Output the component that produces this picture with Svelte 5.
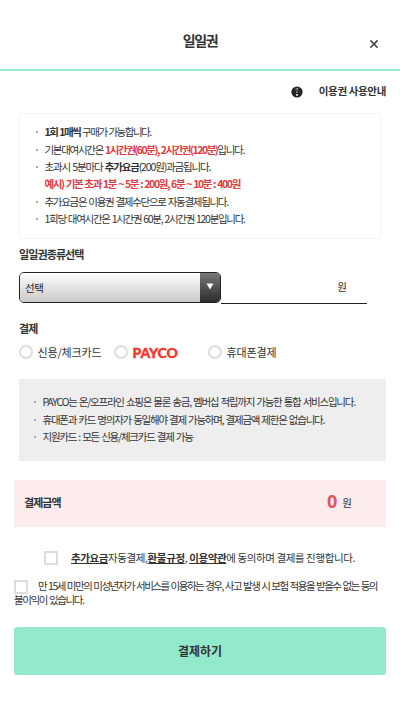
<script>
  const tickets = [
    { id: "1h", name: "1시간권", price: 1000 },
    { id: "2h", name: "2시간권", price: 2000 }
  ];

  let selected = $state("");
  let payment = $state("");
  let agreed = $state(false);
  let adult = $state(false);

  let price = $derived(tickets.find(t => t.id === selected)?.price);
</script>

<div class="page">
  <header>
    <h1>일일권</h1>
    <button class="close" aria-label="닫기">
      <svg width="10" height="10" viewBox="0 0 10 10">
        <path d="M1.4 1.4 L8.6 8.8 M8.6 1.4 L1.4 8.8" stroke="#444" stroke-width="1.6" fill="none" />
      </svg>
    </button>
  </header>

  <div class="guide">
    <svg width="12" height="12" viewBox="0 0 12 12">
      <circle cx="6" cy="6" r="5.6" fill="#222" />
      <path d="M4.6 2.2 Q6 1.2 7.4 2.2 L6.8 7 H5.2 Z" fill="#aaa" />
      <rect x="4.9" y="7.9" width="2.2" height="2" rx="0.8" fill="#ddd" />
      <rect x="5.4" y="2.6" width="1.2" height="4" fill="#222" />
    </svg>
    <span>이용권 사용안내</span>
  </div>

  <ul class="notice">
    <li class="tight"><b>1회 1매씩</b> 구매가 가능합니다.</li>
    <li>기본대여시간은 <b class="red times">1시간권(60분), 2시간권(120분)</b>입니다.</li>
    <li class="loose">초과시 5분마다 <b>추가요금</b>(200원)과금됩니다.</li>
    <li class="plain"><b class="red">예시) 기본 초과 1분 ~ 5분 : 200원, 6분 ~ 10분 : 400원</b></li>
    <li>추가요금은 이용권 결제수단으로 자동결제됩니다.</li>
    <li>1회당 대여시간은 1시간권 60분, 2시간권 120분입니다.</li>
  </ul>

  <h2 class="kind">일일권종류선택</h2>
  <div class="ticket">
    <div class="select">
      <select bind:value={selected} aria-label="일일권종류선택">
        <option value="">선택</option>
        {#each tickets as t (t.id)}
          <option value={t.id}>{t.name}</option>
        {/each}
      </select>
      <span class="arrow">
        <svg width="8" height="7" viewBox="0 0 8 7"><path d="M0.5 0.5 H7.5 L4 6.5 Z" fill="#fff" /></svg>
      </span>
    </div>
    <div class="price">{price ?? ""} 원</div>
  </div>

  <h2 class="pay">결제</h2>
  <div class="methods">
    <label><input type="radio" value="card" bind:group={payment} /><span>신용/체크카드</span></label>
    <label><input type="radio" value="payco" bind:group={payment} /><span class="payco">PAYCO</span></label>
    <label><input type="radio" value="phone" bind:group={payment} /><span>휴대폰결제</span></label>
  </div>

  <ul class="notice gray">
    <li>PAYCO는 온/오프라인 쇼핑은 물론 송금, 멤버십 적립까지 가능한 통합 서비스입니다.</li>
    <li>휴대폰과 카드 명의자가 동일해야 결제 가능하며, 결제금액 제한은 없습니다.</li>
    <li>지원카드 : 모든 신용/체크카드 결제 가능</li>
  </ul>

  <div class="total">
    <b>결제금액</b>
    <div><strong>{price ?? 0}</strong><span>원</span></div>
  </div>

  <label class="agree">
    <input type="checkbox" bind:checked={agreed} />
    <span><u>추가요금</u>자동결제,<u>환불규정</u>, <u>이용약관</u>에 동의하며 결제를 진행합니다.</span>
  </label>

  <label class="age">
    <input type="checkbox" bind:checked={adult} /><span>만 15세 미만의 미성년자가 서비스를 이용하는 경우, 사고 발생 시 보험 적용을 받을수 없는 등의</span><br />불이익이 있습니다.
  </label>

  <button class="submit">결제하기</button>
</div>

<style>
  :global(body) {
    background: #fff;
  }
  .page {
    width: 400px;
    height: 704px;
    overflow: hidden;
    box-sizing: border-box;
    font-family: "Noto Sans CJK KR", sans-serif;
    font-size: 10.5px;
    color: #333;
  }
  button, select, input {
    appearance: none;
    margin: 0;
    padding: 0;
    border: 0;
    background: none;
    font-family: inherit;
    color: inherit;
  }
  header {
    display: grid;
    grid-template-columns: 1fr auto 1fr;
    height: 69px;
    border-bottom: 2px solid #93e9cb;
  }
  h1 {
    grid-column: 2;
    margin: 30px 0 0;
    font-size: 14px;
    line-height: 20px;
    font-weight: 700;
    letter-spacing: -1.3px;
  }
  .close {
    justify-self: end;
    align-self: start;
    width: 10px;
    height: 10px;
    margin: 39px 21px 0 0;
  }
  svg {
    display: block;
  }
  .guide {
    display: flex;
    justify-content: flex-end;
    align-items: center;
    height: 16px;
    margin: 11px 14px 0 0;
    font-weight: 700;
    color: #333;
    letter-spacing: -0.35px;
  }
  .guide svg {
    margin: 3px 16px 0 0;
  }
  .notice {
    list-style: none;
    box-sizing: border-box;
    width: 362px;
    height: 126px;
    margin: 15px 0 0 19px;
    padding: 9px 0 0 15px;
    border: 1px solid #f3f3f3;
    letter-spacing: -1.3px;
    word-spacing: 1px;
    white-space: nowrap;
  }
  .notice li {
    display: flex;
    align-items: center;
    height: 17.4px;
    white-space: pre;
  }
  .notice li::before {
    content: "";
    width: 2px;
    height: 2px;
    margin: 1px 6.5px 0 1px;
    background: #aaa;
  }
  .notice li.plain::before {
    background: none;
  }
  .notice .tight {
    letter-spacing: -1.5px;
  }
  .notice .loose {
    letter-spacing: -1.15px;
  }
  .notice .times {
    letter-spacing: -1.48px;
  }
  .notice .plain {
    letter-spacing: -1.36px;
  }
  b {
    font-weight: 700;
    color: #333;
  }
  b.red {
    color: #e23a3f;
  }
  h2 {
    margin: 0 0 0 19px;
    font-size: 11px;
    line-height: 16px;
    font-weight: 700;
    letter-spacing: -0.9px;
    color: #333;
  }
  .kind {
    margin-top: 7px;
  }
  .ticket {
    display: flex;
    height: 32px;
    margin: 10px 0 0 19px;
  }
  .select {
    display: flex;
    box-sizing: border-box;
    width: 202px;
    height: 31px;
    border: 1px solid #222;
    border-radius: 5px;
    overflow: hidden;
  }
  select {
    flex: 1;
    padding: 0 0 1px 5px;
    font-size: 10.5px;
    letter-spacing: -0.3px;
    color: #222;
    background: linear-gradient(#fff, #c9c9c9);
  }
  .arrow {
    display: flex;
    justify-content: center;
    width: 20px;
    padding-top: 10px;
    background: linear-gradient(#777, #2c2c2c);
    pointer-events: none;
  }
  .price {
    box-sizing: border-box;
    width: 146px;
    padding-right: 20px;
    border-bottom: 1px solid #222;
    text-align: right;
    line-height: 30px;
  }
  .pay {
    margin-top: 16px;
  }
  .methods {
    display: grid;
    grid-template-columns: 95px 94px auto;
    height: 18px;
    margin: 7px 0 0 19px;
    font-size: 11px;
    letter-spacing: -0.15px;
  }
  .methods label {
    display: flex;
    align-items: center;
    gap: 4.5px;
  }
  .methods label span {
    margin-top: -1px;
  }
  input[type="radio"] {
    width: 14px;
    height: 14px;
    box-sizing: border-box;
    border: 2px solid #ddd;
    border-radius: 50%;
  }
  input[type="radio"]:checked {
    background: #93e9cb;
  }
  .methods .payco {
    margin-top: 0;
    font-family: Lato, sans-serif;
    font-size: 14px;
    font-weight: 900;
    letter-spacing: -0.1px;
    color: #f0372b;
    -webkit-text-stroke: 0.4px #f0372b;
  }
  .notice.gray {
    width: 367px;
    height: 82px;
    margin-top: 18px;
    padding-left: 14px;
    padding-top: 14px;
    border: 0;
    background: #eee;
    letter-spacing: -1.23px;
  }
  .total {
    display: flex;
    justify-content: space-between;
    align-items: center;
    box-sizing: border-box;
    width: 372px;
    height: 47px;
    margin: 19px 0 0 14px;
    padding: 0 34px 4px 10px;
    background: #fcecee;
  }
  .total b {
    font-size: 11px;
    letter-spacing: -0.95px;
  }
  .total div {
    display: flex;
    align-items: center;
    gap: 5px;
  }
  .total strong {
    font-family: "Open Sans", sans-serif;
    font-size: 18px;
    line-height: 24px;
    font-weight: 700;
    color: #e1545b;
    margin-top: -1px;
  }
  .total span {
    margin-top: 1px;
  }
  .agree {
    display: flex;
    align-items: center;
    height: 20px;
    margin: 21px 0 0 44px;
    letter-spacing: -0.4px;
  }
  .agree span {
    margin: -2px 0 0 13px;
    white-space: nowrap;
  }
  input[type="checkbox"] {
    box-sizing: border-box;
    width: 14px;
    height: 14px;
    border: 2px solid #ddd;
  }
  input[type="checkbox"]:checked {
    background: #93e9cb;
  }
  u {
    font-weight: 700;
    color: #333;
  }
  .age {
    display: block;
    height: 29px;
    margin: 11px 0 0 14px;
    line-height: 13.5px;
    letter-spacing: -1.4px;
    word-spacing: 1px;
    white-space: nowrap;
  }
  .age span {
    letter-spacing: -1.48px;
  }
  .age input {
    float: left;
    margin: 1px 10px -5px 0;
  }
  .submit {
    display: block;
    width: 372px;
    height: 48px;
    margin: 19px 0 0 14px;
    padding-bottom: 2px;
    border-radius: 3px;
    background: #93e9cb;
    font-size: 12px;
    font-weight: 700;
    color: #333;
  }
</style>
